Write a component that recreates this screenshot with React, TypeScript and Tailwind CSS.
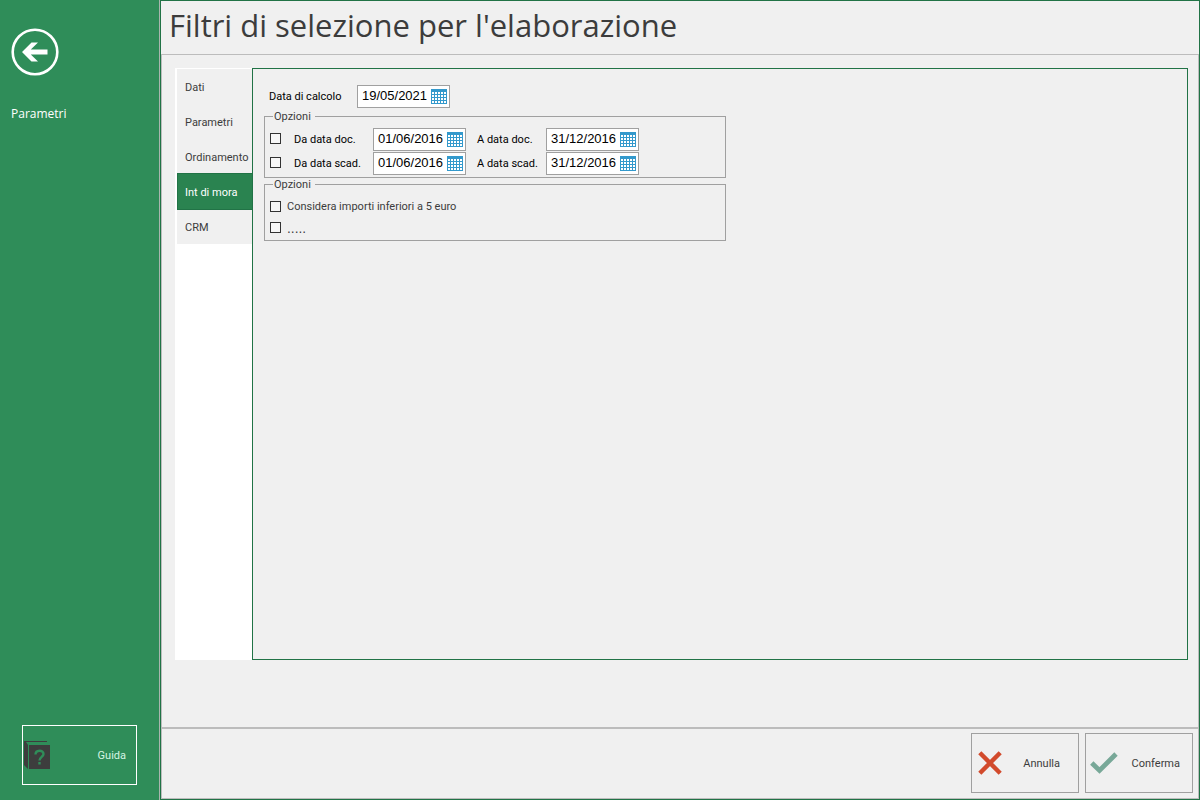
import React, { useState } from 'react';
import clsx from 'clsx';

const tabs = ['Dati', 'Parametri', 'Ordinamento', 'Int di mora', 'CRM'];

const CalendarIcon = () => (
  <svg width="16" height="15" viewBox="0 0 16 15" shapeRendering="crispEdges">
    <rect width="16" height="15" fill="#3399cc" />
    {[3, 6, 9, 12].map(y => [1, 4, 7, 10, 13].map(x => <rect key={`${x}-${y}`} x={x} y={y} width="2" height="2" fill="#fff" />))}
  </svg>
);

const DateField = ({ id, value }: { id: string; value: string }) => {
  const [date, setDate] = useState(value);
  return <div className="flex h-[23px] w-[93px] shrink-0 items-center border border-[#a0a0a0] bg-white">
      <input id={id} type="text" value={date} onChange={e => setDate(e.target.value)} className="w-[73px] min-w-0 pl-1 pb-px font-['Liberation_Sans',Arial,sans-serif] text-[13px] leading-4 text-black outline-none" />
      <button type="button" aria-label="Apri calendario" className="shrink-0">
        <CalendarIcon />
      </button>
    </div>;
};

const Check = ({ id, label, className }: { id: string; label?: string; className?: string }) => (
  <input id={id} type="checkbox" aria-label={label} className={clsx('size-[11px] shrink-0 appearance-none border border-[#333] bg-[#f7f7f7] checked:bg-[#2f8d59]', className)} />
);

const RangeRow = ({ id, suffix }: { id: string; suffix: string }) => (
  <div className="flex items-center">
    <Check id={`${id}-on`} label={`Filtra per data ${suffix}`} className="mb-0.5" />
    <label htmlFor={`${id}-from`} className="ml-[13px] w-[79px] pt-0.5">Da data {suffix}</label>
    <DateField id={`${id}-from`} value="01/06/2016" />
    <label htmlFor={`${id}-to`} className="ml-[11px] w-[69px] pt-0.5">A data {suffix}</label>
    <DateField id={`${id}-to`} value="31/12/2016" />
  </div>
);

const Sidebar = () => (
  <aside className="flex w-40 shrink-0 flex-col border-r border-[#a9b5ae] bg-[#2f8d59] text-white">
    <button type="button" aria-label="Indietro" className="ml-[11px] mt-7 size-12">
      <svg width="48" height="48" viewBox="0 0 48 48">
        <circle cx="24" cy="24" r="22.3" fill="none" stroke="#fff" strokeWidth="2.6" />
        <path d="M11 24 L20.5 14.5 H27 L19.8 21.6 H36.5 V26.4 H19.8 L27 33.5 H20.5 Z" fill="#fff" />
      </svg>
    </button>
    <a href="#parametri" className="ml-[11px] mt-7 font-['Open_Sans','Noto_Sans',sans-serif] text-xs leading-5">Parametri</a>
    <button type="button" className="mb-[15px] ml-[22px] mr-[22px] mt-auto flex h-[60px] items-center justify-between border border-white pl-px pr-[10px] text-[11px] text-[#d5f5e3]">
      <svg width="27" height="29" viewBox="0 0 27 29" fill="#3d3d3d">
        <path d="M0 0H23V1H2L4 4V28L0 24Z" />
        <rect x="5" y="4" width="21" height="24" />
        <path d="M11.5 13.5 C11.5 8.5 19.5 8.5 19.5 13 C19.5 15.8 15.5 16 15.5 19.5 M15.5 21 V23.5" fill="none" stroke="#2f8d59" strokeWidth="2.4" />
      </svg>
      <span className="pt-0.5">Guida</span>
    </button>
  </aside>
);

const App = () => {
  const [active, setActive] = useState('Int di mora');
  return <div className="flex min-h-screen bg-[#f0f0f0] font-[Roboto,'Noto_Sans',sans-serif] text-[11px] text-[#3c3c3c]">
      <Sidebar />
      <main className="flex min-w-0 flex-1 flex-col border border-[#217346]">
        <header className="h-[53px] pl-2">
          <h1 className="font-['Open_Sans','Noto_Sans',sans-serif] text-[31px] leading-[49px]">Filtri di selezione per l'elaborazione</h1>
        </header>
        <div className="flex flex-1 flex-col border border-[#bcbcbc]">
          <div className="mb-[67px] ml-[13px] mr-[10px] mt-[13px] flex flex-1">
            <nav className="flex w-[77px] shrink-0 flex-col bg-white pl-0.5 pt-px">
              {tabs.map(tab => <button key={tab} type="button" onClick={() => setActive(tab)} className={clsx('whitespace-nowrap pt-1 text-left', active === tab ? 'relative -my-px h-[37px] border border-r-0 border-[#217346] bg-[#2a8350] pl-[7px] text-white' : 'h-[35px] bg-[#f0f0f0] pl-2')}>
                  {tab}
                </button>)}
            </nav>
            <form className="min-w-0 flex-1 border border-[#217346] pl-[11px] pt-4">
              <div className="flex items-center pl-[5px] text-black">
                <label htmlFor="calc" className="w-[88px] pt-0.5">Data di calcolo</label>
                <DateField id="calc" value="19/05/2021" />
              </div>
              <fieldset className="mt-[2px] w-[462px] border border-[#a0a0a0] pb-0.5 pl-[5px]">
                <legend className="ml-[3px] pl-px pr-1 leading-[13px]">Opzioni</legend>
                <div className="flex flex-col gap-px pt-[5px] text-black">
                  <RangeRow id="doc" suffix="doc." />
                  <RangeRow id="scad" suffix="scad." />
                </div>
              </fieldset>
              <fieldset className="w-[462px] border border-[#a0a0a0] pb-0.5 pl-[5px]">
                <legend className="ml-[3px] pl-px pr-1 leading-[13px]">Opzioni</legend>
                <div className="pt-[5px]">
                  <div className="flex h-[21px] items-center gap-[6px]">
                    <Check id="small" />
                    <label htmlFor="small" className="pt-0.5">Considera importi inferiori a 5 euro</label>
                  </div>
                  <div className="flex h-[21px] items-center gap-[6px]">
                    <Check id="other" />
                    <label htmlFor="other" className="pt-0.5 font-['DejaVu_Sans',sans-serif] text-xs">.....</label>
                  </div>
                </div>
              </fieldset>
            </form>
          </div>
          <footer className="flex justify-end gap-[6px] border-t-2 border-[#bcbcbc] pb-[5px] pr-[5px] pt-1">
            <button type="button" className="flex h-[60px] w-[108px] items-center justify-between border border-[#a0a0a0] pl-[6px] pr-[18px]">
              <svg width="24" height="24" viewBox="0 0 24 24">
                <path d="M1.8 1.8 L22.2 22.2 M22.2 1.8 L1.8 22.2" stroke="#d24a2c" strokeWidth="4.4" />
              </svg>
              <span className="pt-0.5">Annulla</span>
            </button>
            <button type="submit" className="flex h-[60px] w-[108px] items-center justify-between border border-[#a0a0a0] pl-1 pr-[12px]">
              <svg width="28" height="22" viewBox="0 0 28 22">
                <path d="M1.8 11 L9.5 18.5 L26 2" fill="none" stroke="#78a898" strokeWidth="4.8" />
              </svg>
              <span className="pt-0.5">Conferma</span>
            </button>
          </footer>
        </div>
      </main>
    </div>;
};
export default App;
